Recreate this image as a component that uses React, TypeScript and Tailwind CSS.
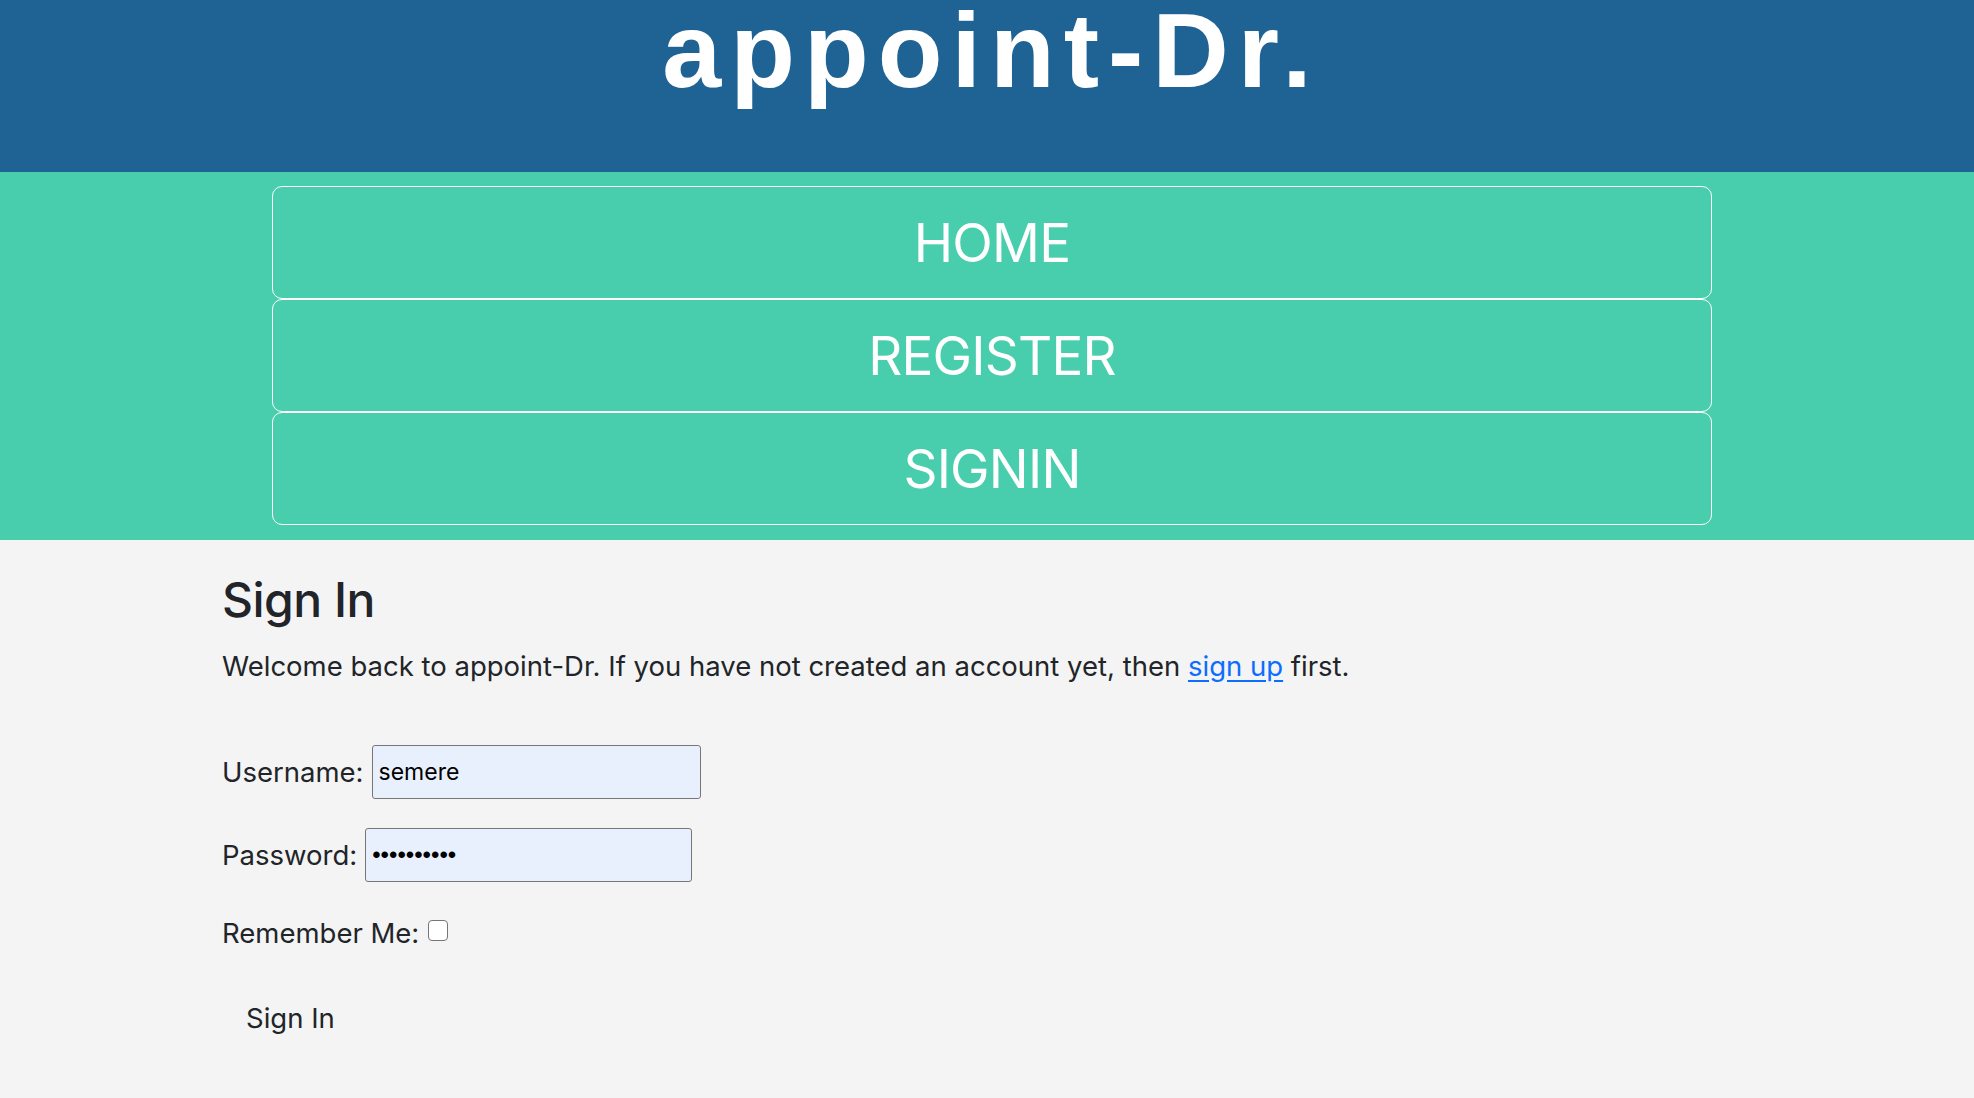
import { useState } from "react";

const navItems = ["HOME", "REGISTER", "SIGNIN"];

const sans = "font-['Inter','Noto_Sans',sans-serif]";

const App = () => {
  const [remember, setRemember] = useState(false);

  return (
    <div className={`min-h-screen flex flex-col bg-[#f4f4f4] text-[#212529] ${sans}`}>
      {/* Brand header */}
      <header className="h-[172px] bg-[#1f6294] overflow-hidden text-center">
        <h1 className="mt-[-3px] pl-[9px] font-['Liberation_Sans',Arial,sans-serif] font-bold text-[106px] leading-none tracking-[9px] text-white">
          appoint-Dr.
        </h1>
      </header>

      {/* Nav */}
      <nav className="bg-[#48cead] pt-[14px] pb-[15px]">
        <ul className="ml-[272px] w-[1440px] flex flex-col">
          {navItems.map((item) => (
            <li key={item}>
              <a
                href="#"
                className="h-[113px] flex items-center justify-center pt-[2px] border border-white rounded-[10px] text-white text-[53px] tracking-[-0.8px] no-underline"
              >
                {item}
              </a>
            </li>
          ))}
        </ul>
      </nav>

      {/* Sign in form */}
      <main className="flex-1 pl-[222px]">
        <h2 className="mt-[31px] text-[48px] font-medium leading-[1.2] tracking-[-0.5px]">Sign In</h2>
        <p className="mt-[18px] text-[27.5px] leading-[38px]">
          Welcome back to appoint-Dr. If you have not created an account yet, then{" "}
          <a href="#" className="text-[#0d6efd] underline underline-offset-[4px]">
            sign up
          </a>{" "}
          first.
        </p>

        <form className="mt-[60px] flex flex-col text-[27.5px] leading-[38px]">
          <div className="flex items-center gap-[8px]">
            <label htmlFor="username">Username:</label>
            <input
              id="username"
              type="text"
              defaultValue="semere"
              className="w-[329px] h-[54px] px-[6px] bg-[#e8f0fe] border border-[#767676] rounded-[3px] text-[23px] text-black outline-none"
            />
          </div>
          <div className="mt-[29px] flex items-center gap-[8px]">
            <label htmlFor="password">Password:</label>
            <input
              id="password"
              type="password"
              defaultValue="semere1234"
              className="w-[327px] h-[54px] px-[6px] bg-[#e8f0fe] border border-[#767676] rounded-[3px] font-['Liberation_Sans',Arial,sans-serif] text-[24px] text-black outline-none"
            />
          </div>
          <div className="mt-[32px] flex items-center gap-[9px]">
            <label htmlFor="remember">Remember Me:</label>
            <input
              id="remember"
              type="checkbox"
              checked={remember}
              onChange={(e) => setRemember(e.target.checked)}
              className="appearance-none w-[20px] h-[21px] mb-[4px] bg-white border border-[#767676] rounded-[4px]"
            />
          </div>
          <div className="mt-[41px]">
            <button type="submit" className="px-[24px] py-[6px] bg-transparent text-[#212529] cursor-pointer">
              Sign In
            </button>
          </div>
        </form>
      </main>
    </div>
  );
};

export default App;
